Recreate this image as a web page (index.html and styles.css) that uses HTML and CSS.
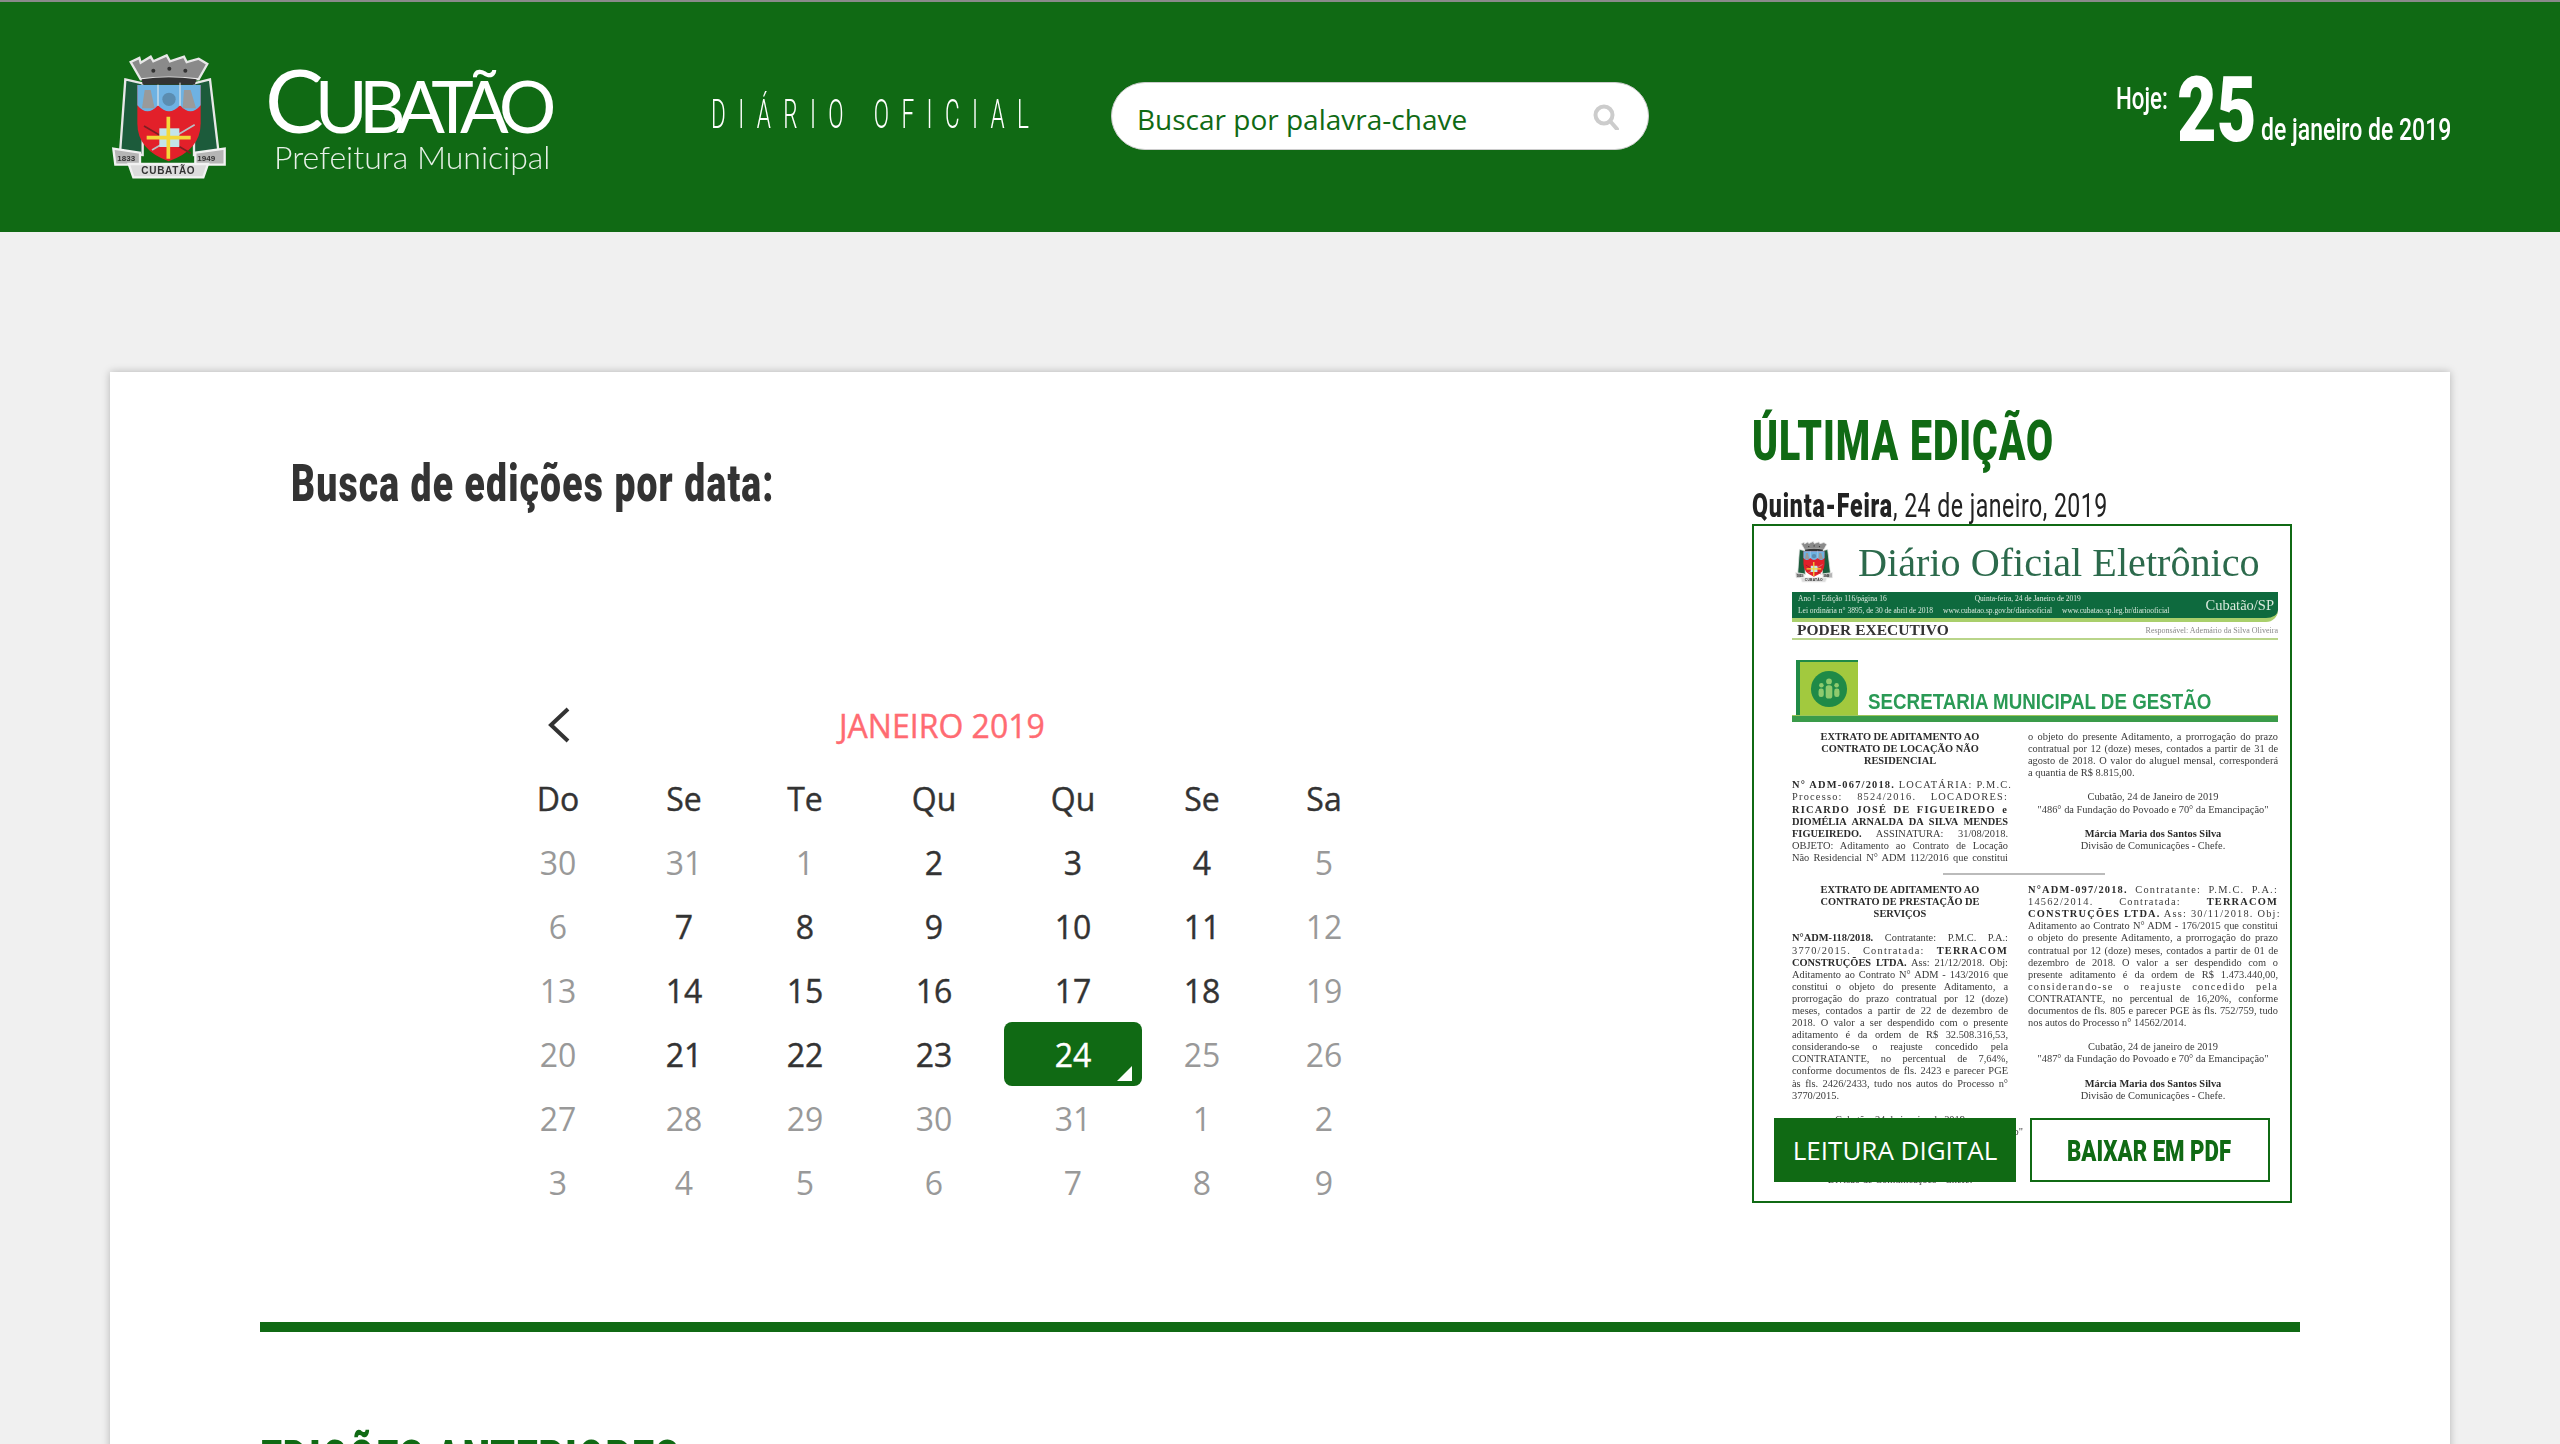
FILE: index.html
```html
<!DOCTYPE html>
<html lang="pt-BR">
<head>
    <meta charset="UTF-8">
    <title>Diário Oficial - Cubatão</title>
    <link rel="stylesheet" href="styles.css">
</head>
<body>
    <header class="topo">
        <div class="marca">
            <svg class="brasao" viewBox="36 42 342 378">
                <g id="brasao-desenho">
                    <path d="M76 118 L128 130 L128 345 L60 340 Z" fill="#1c5b3b" stroke="#e8e8e8" stroke-width="7"/>
                    <path d="M330 118 L282 130 L282 345 L356 340 Z" fill="#1c5b3b" stroke="#e8e8e8" stroke-width="7"/>
                    <path d="M92 66 L118 54 L122 68 L152 50 L160 64 L200 46 L210 64 L252 50 L260 66 L296 56 L322 72 L296 118 Q205 108 122 118 Z" fill="#8a8a8a" stroke="#e8e8e8" stroke-width="7"/>
                    <path d="M125 118 Q205 106 290 118 L284 134 L128 134 Z" fill="#333"/>
                    <circle cx="160" cy="92" r="6" fill="#333"/>
                    <circle cx="208" cy="86" r="6" fill="#333"/>
                    <circle cx="256" cy="92" r="6" fill="#333"/>
                    <path d="M112 135 H302 V250 Q302 330 206 364 Q112 330 112 250 Z" fill="#e2202a"/>
                    <path d="M112 135 H302 V196 Q272 232 240 196 Q207 232 174 196 Q142 232 112 196 Z" fill="#6eb2e2"/>
                    <path d="M134 150 L152 150 L164 205 L126 205 Z M252 150 L272 150 L288 205 L248 205 Z" fill="#9a9a9a"/>
                    <circle cx="207" cy="178" r="20" fill="#5b8db0"/>
                    <path d="M240 128 V198 M174 134 V198" stroke="#eee" stroke-width="3"/>
                    <path d="M132 258 L272 340" stroke="#7c1f22" stroke-width="5"/>
                    <path d="M284 254 L156 330" stroke="#b9c0c4" stroke-width="5"/>
                    <rect x="178" y="265" width="60" height="56" fill="#c3e4ea"/>
                    <path d="M205 230 V356 M140 293 H272" stroke="#f4d83a" stroke-width="11"/>
                    <path d="M40 326 L120 338 L120 374 L46 374 Z M286 338 L374 326 L374 374 L286 374 Z" fill="#b5b5b5" stroke="#f2f2f2" stroke-width="7"/>
                    <path d="M86 372 L324 372 L310 412 L100 412 Z" fill="#dcdcdc" stroke="#f2f2f2" stroke-width="7"/>
                    <text x="205" y="402" class="brasao-nome">CUBATÃO</text>
                    <text x="52" y="362" class="brasao-ano">1833</text>
                    <text x="292" y="362" class="brasao-ano">1949</text>
                </g>
            </svg>
            <div class="marca-texto">
                <div class="marca-nome"><span class="marca-c">C</span>UBATÃO</div>
                <div class="marca-sub">Prefeitura Municipal</div>
            </div>
        </div>
        <div class="diario"><span>DIÁRIO OFICIAL</span></div>
        <form class="busca">
            <span class="busca-texto">Buscar por palavra-chave</span>
            <svg class="busca-icone" viewBox="0 0 26 26"><circle cx="11" cy="11" r="8.5" fill="none" stroke="#ccc" stroke-width="4"/><path d="M17 17 L24 25" stroke="#ccc" stroke-width="4" stroke-linecap="round"/></svg>
        </form>
        <div class="hoje">
            <span class="hoje-rotulo">Hoje:</span>
            <span class="hoje-dia">25</span>
            <span class="hoje-data">de janeiro de 2019</span>
        </div>
    </header>

    <main class="cartao">
        <section class="principal">
            <div class="busca-data">
                <h2 class="titulo-busca"><span>Busca de edições por data:</span></h2>

                <div class="calendario">
                    <div class="cal-topo">
                        <svg class="cal-voltar" viewBox="0 0 22 36"><path d="M20 2 L3 18 L20 34" fill="none" stroke="#333" stroke-width="4"/></svg>
                        <span class="cal-mes">JANEIRO 2019</span>
                    </div>
                    <div class="cal-grade">
                        <div class="dia-semana">Do</div><div class="dia-semana">Se</div><div class="dia-semana">Te</div><div class="dia-semana">Qu</div><div class="dia-semana">Qu</div><div class="dia-semana">Se</div><div class="dia-semana">Sa</div>

                        <div class="dia fora">30</div><div class="dia fora">31</div><div class="dia fora">1</div><div class="dia">2</div><div class="dia">3</div><div class="dia">4</div><div class="dia fora">5</div>
                        <div class="dia fora">6</div><div class="dia">7</div><div class="dia">8</div><div class="dia">9</div><div class="dia">10</div><div class="dia">11</div><div class="dia fora">12</div>
                        <div class="dia fora">13</div><div class="dia">14</div><div class="dia">15</div><div class="dia">16</div><div class="dia">17</div><div class="dia">18</div><div class="dia fora">19</div>
                        <div class="dia fora">20</div><div class="dia">21</div><div class="dia">22</div><div class="dia">23</div><div class="dia ativo">24</div><div class="dia fora">25</div><div class="dia fora">26</div>
                        <div class="dia fora">27</div><div class="dia fora">28</div><div class="dia fora">29</div><div class="dia fora">30</div><div class="dia fora">31</div><div class="dia fora">1</div><div class="dia fora">2</div>
                        <div class="dia fora">3</div><div class="dia fora">4</div><div class="dia fora">5</div><div class="dia fora">6</div><div class="dia fora">7</div><div class="dia fora">8</div><div class="dia fora">9</div>
                    </div>
                </div>
            </div>

            <aside class="ultima">
                <h2 class="ultima-titulo"><span>ÚLTIMA EDIÇÃO</span></h2>
                <p class="ultima-data"><span><b>Quinta-Feira</b>, 24 de janeiro, 2019</span></p>

                <div class="capa">
                    <div class="doc">
                        <div class="doc-cabeca">
                            <svg class="doc-brasao" viewBox="36 42 342 378"><use href="#brasao-desenho"/></svg>
                            <span class="doc-nome">Diário Oficial Eletrônico</span>
                        </div>
                        <div class="doc-faixa">
                            <div class="doc-faixa-info">
                                <div class="doc-faixa-l1"><span>Ano I - Edição 116/página 16</span><span>Quinta-feira, 24 de Janeiro de 2019</span></div>
                                <div class="doc-faixa-l2"><span>Lei ordinária n° 3895, de 30 de abril de 2018</span><span>www.cubatao.sp.gov.br/diariooficial</span><span>www.cubatao.sp.leg.br/diariooficial</span></div>
                            </div>
                            <span class="doc-cidade">Cubatão/SP</span>
                        </div>
                        <div class="doc-poder"><b>PODER EXECUTIVO</b><span>Responsável: Ademário da Silva Oliveira</span></div>
                        <div class="doc-secretaria">
                            <div class="doc-sec-icone">
                                <svg viewBox="0 0 40 40"><circle cx="20" cy="20" r="19" fill="#1f8a47"/><g fill="#8fca6e"><circle cx="20" cy="12" r="3"/><rect x="16.5" y="16" width="7" height="14" rx="3"/><circle cx="12" cy="16" r="2.4"/><rect x="9" y="19.5" width="5.5" height="9" rx="2.5"/><circle cx="28" cy="16" r="2.4"/><rect x="25.5" y="19.5" width="5.5" height="9" rx="2.5"/></g></svg>
                            </div>
                            <span class="doc-sec-nome">SECRETARIA MUNICIPAL DE GESTÃO</span>
                        </div>

                        <div class="doc-colunas">
                            <div class="doc-col">
                                <div class="ln cen neg">EXTRATO DE ADITAMENTO AO</div>
                                <div class="ln cen neg">CONTRATO DE LOCAÇÃO NÃO</div>
                                <div class="ln cen neg">RESIDENCIAL</div>
                                <div class="ln">&nbsp;</div>
                                <div class="ln jus ab"><b>N° ADM-067/2018.</b> LOCATÁRIA: P.M.C.</div>
                                <div class="ln jus ab">Processo: 8524/2016. LOCADORES:</div>
                                <div class="ln jus neg ab">RICARDO JOSÉ DE FIGUEIREDO e</div>
                                <div class="ln jus neg">DIOMÉLIA ARNALDA DA SILVA MENDES</div>
                                <div class="ln jus"><b>FIGUEIREDO.</b> ASSINATURA: 31/08/2018.</div>
                                <div class="ln jus">OBJETO: Aditamento ao Contrato de Locação</div>
                                <div class="ln jus">Não Residencial N° ADM 112/2016 que constitui</div>
                            </div>
                            <div class="doc-col">
                                <div class="ln jus">o objeto do presente Aditamento, a prorrogação do prazo</div>
                                <div class="ln jus">contratual por 12 (doze) meses, contados a partir de 31 de</div>
                                <div class="ln jus">agosto de 2018. O valor do aluguel mensal, corresponderá</div>
                                <div class="ln">a quantia de R$ 8.815,00.</div>
                                <div class="ln">&nbsp;</div>
                                <div class="ln cen">Cubatão, 24 de Janeiro de 2019</div>
                                <div class="ln cen">"486° da Fundação do Povoado e 70° da Emancipação"</div>
                                <div class="ln">&nbsp;</div>
                                <div class="ln cen neg">Márcia Maria dos Santos Silva</div>
                                <div class="ln cen">Divisão de Comunicações - Chefe.</div>
                            </div>
                        </div>

                        <div class="doc-regua"></div>

                        <div class="doc-colunas">
                            <div class="doc-col">
                                <div class="ln cen neg">EXTRATO DE ADITAMENTO AO</div>
                                <div class="ln cen neg">CONTRATO DE PRESTAÇÃO DE</div>
                                <div class="ln cen neg">SERVIÇOS</div>
                                <div class="ln">&nbsp;</div>
                                <div class="ln jus"><b>N°ADM-118/2018.</b> Contratante: P.M.C. P.A.:</div>
                                <div class="ln jus ab">3770/2015. Contratada: <b>TERRACOM</b></div>
                                <div class="ln jus"><b>CONSTRUÇÕES LTDA.</b> Ass: 21/12/2018. Obj:</div>
                                <div class="ln jus">Aditamento ao Contrato N° ADM - 143/2016 que</div>
                                <div class="ln jus">constitui o objeto do presente Aditamento, a</div>
                                <div class="ln jus">prorrogação do prazo contratual por 12 (doze)</div>
                                <div class="ln jus">meses, contados a partir de 22 de dezembro de</div>
                                <div class="ln jus">2018. O valor a ser despendido com o presente</div>
                                <div class="ln jus">aditamento é da ordem de R$ 32.508.316,53,</div>
                                <div class="ln jus">considerando-se o reajuste concedido pela</div>
                                <div class="ln jus">CONTRATANTE, no percentual de 7,64%,</div>
                                <div class="ln jus">conforme documentos de fls. 2423 e parecer PGE</div>
                                <div class="ln jus">às fls. 2426/2433, tudo nos autos do Processo n°</div>
                                <div class="ln">3770/2015.</div>
                                <div class="ln">&nbsp;</div>
                                <div class="ln cen">Cubatão, 24 de janeiro de 2019</div>
                                <div class="ln cen">"486° da Fundação do Povoado e 70° da Emancipação"</div>
                                <div class="ln">&nbsp;</div>
                                <div class="ln">&nbsp;</div>
                                <div class="ln cen neg">Márcia Maria dos Santos Silva</div>
                                <div class="ln cen">Divisão de Comunicações - Chefe.</div>
                            </div>
                            <div class="doc-col">
                                <div class="ln jus ab"><b>N°ADM-097/2018.</b> Contratante: P.M.C. P.A.:</div>
                                <div class="ln jus ab">14562/2014. Contratada: <b>TERRACOM</b></div>
                                <div class="ln jus ab"><b>CONSTRUÇÕES LTDA.</b> Ass: 30/11/2018. Obj:</div>
                                <div class="ln jus">Aditamento ao Contrato N° ADM - 176/2015 que constitui</div>
                                <div class="ln jus">o objeto do presente Aditamento, a prorrogação do prazo</div>
                                <div class="ln jus">contratual por 12 (doze) meses, contados a partir de 01 de</div>
                                <div class="ln jus">dezembro de 2018. O valor a ser despendido com o</div>
                                <div class="ln jus">presente aditamento é da ordem de R$ 1.473.440,00,</div>
                                <div class="ln jus ab">considerando-se o reajuste concedido pela</div>
                                <div class="ln jus">CONTRATANTE, no percentual de 16,20%, conforme</div>
                                <div class="ln jus">documentos de fls. 805 e parecer PGE às fls. 752/759, tudo</div>
                                <div class="ln">nos autos do Processo n° 14562/2014.</div>
                                <div class="ln">&nbsp;</div>
                                <div class="ln cen">Cubatão, 24 de janeiro de 2019</div>
                                <div class="ln cen">"487° da Fundação do Povoado e 70° da Emancipação"</div>
                                <div class="ln">&nbsp;</div>
                                <div class="ln cen neg">Márcia Maria dos Santos Silva</div>
                                <div class="ln cen">Divisão de Comunicações - Chefe.</div>
                            </div>
                        </div>
                    </div>

                    <div class="capa-botoes">
                        <a class="botao botao-cheio">LEITURA DIGITAL</a>
                        <a class="botao botao-vazado"><span>BAIXAR EM PDF</span></a>
                    </div>
                </div>
            </aside>
        </section>

        <hr class="divisor">

        <h2 class="anteriores"><span>EDIÇÕES ANTERIORES</span></h2>
    </main>
</body>
</html>
```

FILE: styles.css
```css
/* Reset */
* {
    margin: 0;
    padding: 0;
    box-sizing: border-box;
}

html, body {
    height: 1444px;
    overflow: hidden;
}

body {
    background: #f0f0f0;
    font-family: "Open Sans", sans-serif;
    color: #333;
}

/* Titulos estreitos: nao ha fonte condensada instalada */
.titulo-busca span,
.ultima-titulo span,
.ultima-data span,
.anteriores span,
.diario span,
.botao-vazado span,
.hoje-rotulo,
.hoje-dia,
.hoje-data {
    display: block;
    font-family: "Roboto", sans-serif;
    white-space: nowrap;
    transform-origin: left center;
}

/* Faixa verde do topo */
.topo {
    height: 232px;
    background: #106a14;
    border-top: 2px solid #8a8a8a;
    display: flex;
    align-items: center;
    padding-left: 112px;
    color: #fff;
}

.marca {
    display: flex;
    align-items: center;
    width: 599px;
}

.brasao {
    width: 114px;
    height: 126px;
    filter: blur(0.6px);
}

.brasao-nome {
    font: bold 30px "Liberation Sans", sans-serif;
    fill: #333;
    text-anchor: middle;
    letter-spacing: 2px;
}

.brasao-ano {
    font: bold 24px "Liberation Sans", sans-serif;
    fill: #333;
}

.marca-texto {
    margin-left: 39px;
}

.marca-nome {
    font-family: "Lato", sans-serif;
    font-weight: 400;
    font-size: 72px;
    line-height: 68px;
    letter-spacing: -8.7px;
    white-space: nowrap;
    margin-top: 5px;
}

.marca-c {
    font-size: 88px;
    letter-spacing: -9px;
}

.marca-sub {
    font-family: "Lato", sans-serif;
    font-weight: 300;
    font-size: 32px;
    line-height: 36px;
    margin-left: 9px;
    opacity: 0.9;
    white-space: nowrap;
}

.diario {
    width: 400px;
    margin-top: -7px;
}

.diario span {
    font-size: 41px;
    font-weight: 300;
    letter-spacing: 22.5px;
    transform: scaleX(0.55);
}

.busca {
    width: 538px;
    height: 68px;
    background: #fff;
    border-radius: 34px;
    border: 1px solid #ccc;
    display: flex;
    align-items: center;
    justify-content: space-between;
    padding: 0 29px 0 25px;
    margin-top: -2px;
}

.busca-texto {
    color: #106a14;
    font-size: 28px;
    margin-top: 5px;
    white-space: nowrap;
}

.busca-icone {
    width: 26px;
    height: 26px;
    margin-top: 1px;
}

.hoje {
    margin-left: auto;
    padding-right: 110px;
    display: flex;
    align-items: flex-end;
    margin-top: -12px;
}

.hoje-rotulo {
    width: 52px;
    font-size: 31px;
    font-weight: 500;
    margin-bottom: 32px;
    transform: scaleX(0.72);
}

.hoje-dia {
    width: 76px;
    font-size: 90px;
    line-height: 76px;
    font-weight: 900;
    margin: 0 8px 0 9px;
    transform: scaleX(0.76);
}

.hoje-data {
    width: 189px;
    font-size: 32px;
    font-weight: 500;
    margin-bottom: 1px;
    transform: scaleX(0.72);
}

/* Cartao branco */
.cartao {
    margin: 140px 110px 0;
    background: #fff;
    box-shadow: 0 0 8px rgba(0, 0, 0, 0.25);
    padding: 28px 150px 0;
}

.principal {
    display: flex;
    justify-content: space-between;
    padding-right: 8px;
}

.titulo-busca {
    display: flex;
    line-height: 60px;
    margin: 54px 0 0 31px;
    color: #333;
}

.titulo-busca span {
    font-size: 52px;
    font-weight: 900;
    letter-spacing: 1.6px;
    transform: scaleX(0.717);
}

.calendario {
    margin: 179px 0 0 234px;
    width: 892px;
}

.cal-topo {
    display: flex;
    align-items: center;
    height: 64px;
    margin-bottom: 9px;
}

.cal-voltar {
    width: 22px;
    height: 36px;
    margin-left: 54px;
}

.cal-mes {
    font-size: 32px;
    color: #ff6b72;
    -webkit-text-stroke: 0.4px #ff6b72;
    margin-left: 269px;
}

.cal-grade {
    display: grid;
    grid-template-columns: 128px 124px 118px 140px 138px 120px 124px;
    grid-auto-rows: 64px;
}

.dia-semana, .dia {
    display: flex;
    align-items: center;
    justify-content: center;
    font-size: 32px;
    color: #333;
    -webkit-text-stroke: 0.4px currentColor;
}

.dia.fora {
    color: #999;
    -webkit-text-stroke: 0;
}

.dia.ativo {
    position: relative;
    background: #106a14;
    color: #fff;
    border-radius: 8px;
}

/* triangulo do dia selecionado */
.dia.ativo::after {
    content: "";
    position: absolute;
    right: 10px;
    bottom: 5px;
    border-left: 15px solid transparent;
    border-bottom: 15px solid #fff;
}

/* Ultima edicao */
.ultima {
    width: 540px;
    padding-top: 6px;
}

.ultima-titulo {
    display: flex;
    line-height: 70px;
    color: #106a14;
}

.ultima-titulo span {
    font-size: 56px;
    font-weight: 900;
    letter-spacing: 1.4px;
    transform: scaleX(0.7);
}

.ultima-data {
    display: flex;
    line-height: 38px;
    margin-top: 10px;
    color: #222;
}

.ultima-data span {
    font-size: 34px;
    letter-spacing: 0.7px;
    transform: scaleX(0.68);
}

.ultima-data b {
    font-weight: 900;
    letter-spacing: 1.2px;
}

.capa {
    position: relative;
    height: 679px;
    border: 2px solid #106a14;
    overflow: hidden;
}

.doc {
    padding: 12px 12px 0 38px;
    font-family: "Liberation Serif", serif;
    color: #333;
    filter: blur(0.6px);
}

.doc-cabeca {
    display: flex;
    align-items: center;
    height: 48px;
}

.doc-brasao {
    width: 38px;
    height: 42px;
    margin-left: 3px;
}

.doc-nome {
    font-size: 40.2px;
    color: #2c6a4c;
    margin-left: 25px;
    white-space: nowrap;
}

.doc-faixa {
    display: flex;
    justify-content: space-between;
    align-items: center;
    height: 30px;
    margin-top: 6px;
    padding: 0 4px 0 6px;
    background: #0e6a3e;
    border-bottom: 4px solid #a9cf6b;
    border-radius: 0 0 12px 0;
    color: #d8e8dc;
}

.doc-faixa-info {
    font-size: 7.5px;
    line-height: 12px;
    white-space: nowrap;
}

.doc-faixa-l1 span {
    margin-right: 88px;
}

.doc-faixa-l2 span {
    margin-right: 10px;
}

.doc-cidade {
    font-size: 14.5px;
    white-space: nowrap;
}

.doc-poder {
    display: flex;
    justify-content: space-between;
    align-items: center;
    height: 18px;
    border-bottom: 2px solid #b9d58a;
    padding-left: 5px;
    font-size: 15.5px;
}

.doc-poder span {
    font-size: 8px;
    color: #888;
}

.doc-secretaria {
    display: flex;
    height: 62px;
    margin-top: 20px;
    align-items: flex-end;
    border-bottom: 6px solid #3a9b4a;
    box-shadow: inset 0 -1px 0 #9cc65a;
}

.doc-sec-icone {
    width: 62px;
    height: 55px;
    margin-left: 4px;
    background: #a2c93e;
    border-left: 4px solid #1f8a47;
    border-top: 2px solid #1f8a47;
    display: flex;
    align-items: center;
    justify-content: center;
    margin-bottom: 1px;
}

.doc-sec-icone svg {
    width: 38px;
    height: 38px;
}

.doc-sec-nome {
    font-family: "Liberation Sans", sans-serif;
    font-size: 22px;
    font-weight: bold;
    color: #2a9a55;
    margin: 0 0 1px 10px;
    white-space: nowrap;
    transform: scaleX(0.853);
    transform-origin: left center;
}

.doc-colunas {
    display: grid;
    grid-template-columns: 216px 250px;
    column-gap: 20px;
    margin-top: 9px;
}

.ln {
    font-size: 10.4px;
    line-height: 12.1px;
    height: 12.1px;
    white-space: nowrap;
    color: #3a3a3a;
}

.ln.jus {
    text-align: justify;
    text-align-last: justify;
}

.ln.ab {
    letter-spacing: 1.2px;
}

.ln.cen {
    text-align: center;
}

.ln.neg, .ln b {
    font-weight: bold;
    color: #2a2a2a;
}

.doc-regua {
    width: 162px;
    height: 2px;
    background: #bbb;
    margin: 9px 0 1px 151px;
}

.capa-botoes {
    position: absolute;
    left: 20px;
    bottom: 19px;
    display: flex;
    gap: 14px;
}

.botao {
    height: 64px;
    display: flex;
    align-items: center;
    justify-content: center;
}

.botao-cheio {
    width: 242px;
    background: #106a14;
    color: #fff;
    font-size: 26px;
    white-space: nowrap;
}

.botao-vazado {
    width: 240px;
    background: #fff;
    border: 2px solid #106a14;
    color: #106a14;
    justify-content: flex-start;
    padding-left: 35px;
}

.botao-vazado span {
    font-size: 30px;
    font-weight: 900;
    transform: scaleX(0.74);
}

/* Parte de baixo */
.divisor {
    border: 0;
    height: 10px;
    background: #106a14;
    margin-top: 108px;
}

.anteriores {
    display: flex;
    line-height: 70px;
    color: #106a14;
    margin-top: 94px;
}

.anteriores span {
    font-size: 56px;
    font-weight: 900;
    letter-spacing: 1.2px;
    transform: scaleX(0.7);
}
```
